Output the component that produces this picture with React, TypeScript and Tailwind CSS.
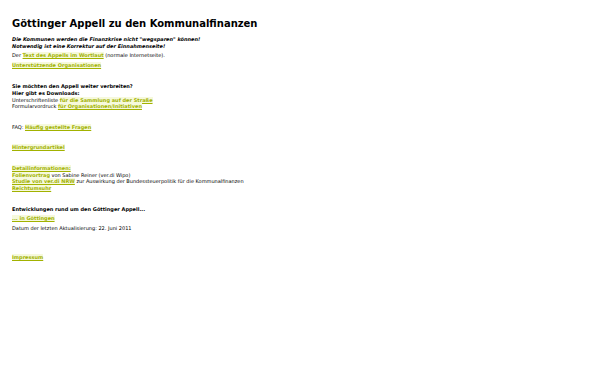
const linkClass =
  "font-bold text-[#a2b200] underline bg-[#f6f9dc] [text-underline-offset:1px]";

function Link({ children }: { children: React.ReactNode }) {
  return (
    <a href="#" className={linkClass}>
      {children}
    </a>
  );
}

export default function App() {
  return (
    <div className="min-h-[375px] w-[600px] bg-white px-3 pt-[15px] font-['DejaVu_Sans',sans-serif] text-[5px] leading-[7px] text-black">
      <h1 className="pt-[1px] text-[10px] font-bold leading-[16px]">
        Göttinger Appell zu den Kommunalfinanzen
      </h1>

      <p className="mt-[4px] font-bold italic">
        Die Kommunen werden die Finanzkrise nicht "wegsparen" können!
        <br />
        Notwendig ist eine Korrektur auf der Einnahmenseite!
      </p>

      <p className="mt-[2px]">
        Der <Link>Text des Appells im Wortlaut</Link> (normale Internetseite).
      </p>

      <p className="mt-[3px]">
        <Link>Unterstützende Organisationen</Link>
      </p>

      <p className="mt-[14px] font-bold">
        Sie möchten den Appell weiter verbreiten?
        <br />
        Hier gibt es Downloads:
      </p>
      <p>
        Unterschriftenliste <Link>für die Sammlung auf der Straße</Link>
      </p>
      <p className="-mt-[1px]">
        Formularvordruck <Link>für Organisationen/Initiativen</Link>
      </p>

      <p className="mt-[14px]">
        FAQ: <Link>Häufig gestellte Fragen</Link>
      </p>

      <p className="mt-[13px]">
        <Link>Hintergrundartikel</Link>
      </p>

      <p className="mt-[14px]">
        <Link>Detailinformationen:</Link>
        <br />
        <Link>Folienvortrag</Link> von Sabine Reiner (ver.di Wipo)
      </p>
      <p className="-mt-[1px]">
        <Link>Studie von ver.di NRW</Link> zur Auswirkung der
        Bundessteuerpolitik für die Kommunalfinanzen
        <br />
        <Link>Reichtumsuhr</Link>
      </p>

      <p className="mt-[14px] font-bold">
        Entwicklungen rund um den Göttinger Appell...
      </p>

      <p className="mt-[2px]">
        <Link>... in Göttingen</Link>
      </p>

      <p className="mt-[3px]">Datum der letzten Aktualisierung: 22. Juni 2011</p>

      <p className="mt-[22px]">
        <Link>Impressum</Link>
      </p>
    </div>
  );
}
